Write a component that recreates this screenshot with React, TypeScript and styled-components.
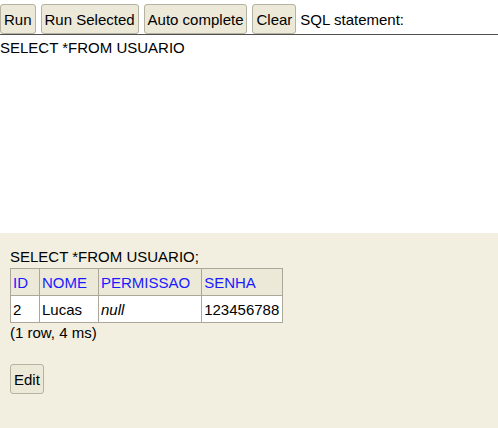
import React from "react";
import styled, { createGlobalStyle } from "styled-components";

const Global = createGlobalStyle`
  html, body { margin: 0; padding: 0; background: #ffffff; }
  body { font-family: "Liberation Sans", Arial, sans-serif; font-size: 15px; color: #000; }
  #root { height: 428px; }
`;

const Page = styled.div`
  display: flex;
  flex-direction: column;
  width: 498px;
  height: 428px;
  overflow: hidden;
`;

const Toolbar = styled.div`
  display: flex;
  align-items: center;
  gap: 5px;
  padding-top: 4px;
  border-bottom: 1px solid #505050;
  height: 30px;
`;

const Button = styled.button`
  font-family: "Liberation Sans", Arial, sans-serif;
  font-size: 15px;
  line-height: 17px;
  color: #000;
  height: 30px;
  padding: 0 3px;
  margin: 0;
  background: #ece9d8;
  border: 1px solid #b5b29f;
  border-radius: 3px;
  cursor: pointer;
`;

const Label = styled.span`
  line-height: 17px;
  margin-left: -1px;
`;

const Editor = styled.div`
  height: 194px;
  padding-top: 4px;
  line-height: 17px;
  white-space: pre;
`;

const Results = styled.div`
  flex: 1;
  background: #f2efe0;
  padding: 15px 10px 0 10px;
  line-height: 17px;
`;

const Statement = styled.div`
  margin-bottom: 3px;
`;

const Table = styled.table`
  border-collapse: collapse;
  background: #ffffff;
`;

const Th = styled.th`
  background: #ece9d8;
  border: 1px solid #aca899;
  font-weight: normal;
  text-align: left;
  padding: 0 11px 0 2px;
  height: 26px;
  color: #1a1aff;
`;

const Td = styled.td<{ $italic?: boolean }>`
  border: 1px solid #aca899;
  padding: 0 3px 0 2px;
  height: 26px;
  font-style: ${(p) => (p.$italic ? "italic" : "normal")};
`;

const Summary = styled.div`
  margin-top: 1px;
`;

const EditRow = styled.div`
  margin-top: 23px;
`;

export default function App() {
  return (
    <Page>
      <Global />
      <Toolbar>
        <Button>Run</Button>
        <Button>Run Selected</Button>
        <Button>Auto complete</Button>
        <Button>Clear</Button>
        <Label>SQL statement:</Label>
      </Toolbar>
      <Editor>SELECT *FROM USUARIO</Editor>
      <Results>
        <Statement>SELECT *FROM USUARIO;</Statement>
        <Table>
          <thead>
            <tr>
              <Th>ID</Th>
              <Th>NOME</Th>
              <Th>PERMISSAO</Th>
              <Th>SENHA</Th>
            </tr>
          </thead>
          <tbody>
            <tr>
              <Td>2</Td>
              <Td>Lucas</Td>
              <Td $italic>null</Td>
              <Td>123456788</Td>
            </tr>
          </tbody>
        </Table>
        <Summary>(1 row, 4 ms)</Summary>
        <EditRow>
          <Button>Edit</Button>
        </EditRow>
      </Results>
    </Page>
  );
}
